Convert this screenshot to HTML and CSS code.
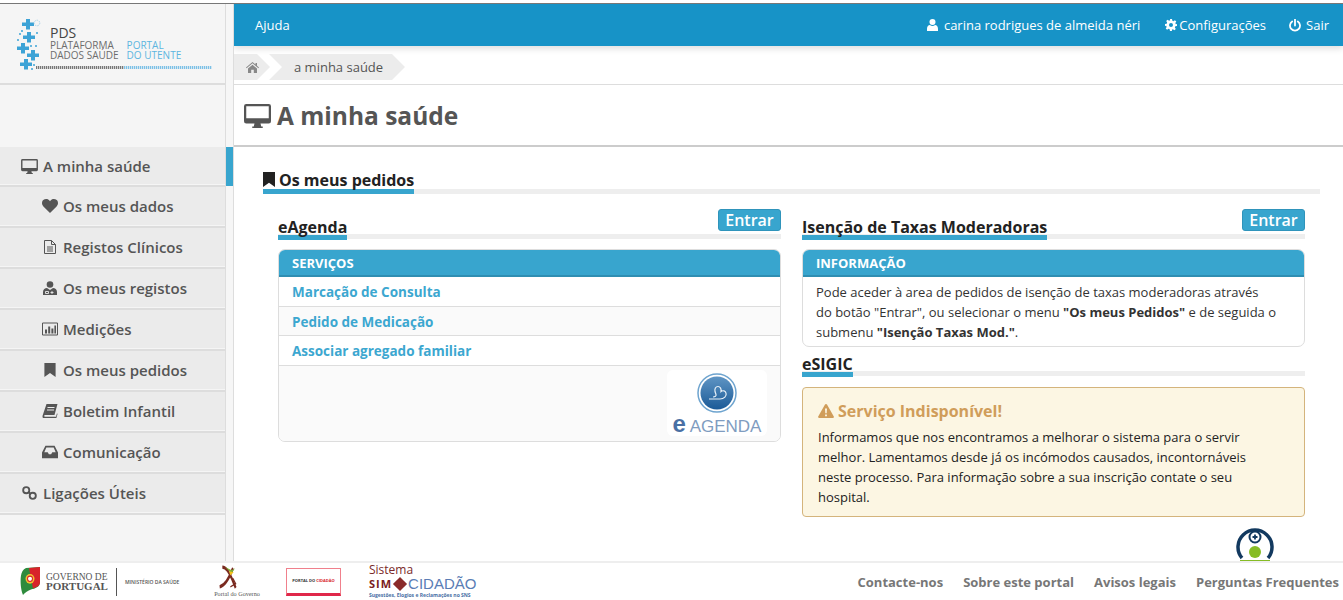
FILE: index.html
```html
<!DOCTYPE html>
<html lang="pt">
<head>
<meta charset="utf-8">
<title>A minha saúde</title>
<link rel="stylesheet" href="styles.css">
</head>
<body>
<svg class="defs" width="0" height="0" aria-hidden="true">
  <symbol id="i-desktop" viewBox="0 0 18 16"><path d="M1.5 0h15A1.5 1.5 0 0 1 18 1.5v10a1.5 1.5 0 0 1-1.500 1.500H11l.5 2h1v1h-7v-1h1l.5-2H1.500A1.500 1.500 0 0 1 0 11.500v-10A1.500 1.500 0 0 1 1.500 0zM1.500 1.500v8h15v-8z" fill-rule="evenodd"/></symbol>
  <symbol id="i-heart" viewBox="0 0 16 14"><path d="M8 14 1.400 7.500C-.5 5.500-.4 2.600 1.300 1.100 3-.4 5.700-.3 7.200 1.300L8 2.200l.8-.9C10.300-.3 13-.4 14.700 1.100c1.700 1.500 1.800 4.400-.1 6.400z"/></symbol>
  <symbol id="i-file" viewBox="0 0 12 14"><path d="M.5.500h7l4 4v9H.5zM7.500.500v4h4M3 7h6M3 9h6M3 11h6" fill="none" stroke="currentColor"/></symbol>
  <symbol id="i-userdoc" viewBox="0 0 14 14"><circle cx="7" cy="3.500" r="3.300"/><path d="M0 14v-3c0-2.500 2-4 4-4l3 2 3-2c2 0 4 1.500 4 4v3z"/><path d="M2.500 10.500h3v2h-3zM9 10v3M7.500 11.500h3" fill="none" stroke="#ebebeb" stroke-width=".9"/></symbol>
  <symbol id="i-chart" viewBox="0 0 16 13"><path d="M.5.500h15v12H.5z" fill="none" stroke="currentColor"/><path d="M3 7h2v4H3zM6.200 4h2v7h-2zM9.400 6h2v5h-2zM12.400 3h1.600v8h-1.600z"/></symbol>
  <symbol id="i-bookmark" viewBox="0 0 12 15"><path d="M0 0h12v15L6 10.800 0 15z"/></symbol>
  <symbol id="i-book" viewBox="0 0 15 14"><path d="M4 0h11l-3 11H3c-1 0-1.300.6-1.300 1s.3.800 1.300.800h10.500l1-3.500.5.700-1.400 5H3c-2 0-3-1-3-2.500 0-.5.100-1 .3-1.500zM5 3v1h7V3zM4.500 5.500v1h7v-1z" fill-rule="evenodd"/></symbol>
  <symbol id="i-inbox" viewBox="0 0 14 11"><path d="M3 0h8l3 6v5H0V6zM3.800 1.500 2 5.700h3l1 1.800h2l1-1.800h3l-1.800-4.200z" fill-rule="evenodd"/></symbol>
  <symbol id="i-link" viewBox="0 0 16 15"><g fill="none" stroke="currentColor" stroke-width="2"><circle cx="4.500" cy="4.500" r="3.300"/><circle cx="11.500" cy="10.500" r="3.300"/><path d="M6.500 6.500 9.500 8.500"/></g></symbol>
  <symbol id="i-home" viewBox="0 0 13 11"><path d="M6.500 0 9.500 2.500V1h1.500v2.800L13 5.500l-.6.700-5.900-5-5.900 5L0 5.500zM2 6.500l4.500-3.800L11 6.500V11H7.800V7.800H5.200V11H2z"/></symbol>
  <symbol id="i-user" viewBox="0 0 12 13"><circle cx="6" cy="3.300" r="3.300"/><path d="M0 13v-2.500C0 8 1.500 6.500 3.200 6.500 4 7.100 5 7.500 6 7.500s2-.4 2.800-1C10.500 6.500 12 8 12 10.500V13z"/></symbol>
  <symbol id="i-cog" viewBox="0 0 24 24"><path d="M10 0h4l.7 3.400 2.200.9 2.900-1.900 2.800 2.800-1.900 2.900.9 2.200L24 10v4l-3.400.7-.9 2.200 1.900 2.900-2.800 2.800-2.900-1.900-2.200.9L14 24h-4l-.7-3.400-2.200-.9-2.900 1.900-2.800-2.800 1.900-2.900-.9-2.200L0 14v-4l3.400-.7.900-2.200-1.900-2.900 2.800-2.800 2.900 1.900 2.200-.9zM12 8a4 4 0 1 0 0 8 4 4 0 0 0 0-8z" fill-rule="evenodd"/></symbol>
  <symbol id="i-power" viewBox="0 0 12 13"><path d="M3.200 2.500a5 5 0 1 0 5.600 0M6 .5v6" fill="none" stroke="currentColor" stroke-width="1.800" stroke-linecap="round"/></symbol>
  <symbol id="i-warning" viewBox="0 0 16 14"><path d="M8 0c.5 0 .8.200 1 .6l6.800 12c.4.700-.1 1.400-.8 1.400H1c-.7 0-1.200-.7-.8-1.400L7 .6C7.200.2 7.500 0 8 0zM7 4.500l.3 4.800h1.400L9 4.500zM7.100 10.500v1.800h1.800v-1.800z" fill-rule="evenodd"/></symbol>
</svg>

<div class="topline"></div>

<div class="app">
  <aside class="sidebar">
    <div class="logo">
      <svg class="logo-mark" width="32" height="54" viewBox="0 0 32 54" aria-hidden="true">
        <path d="M9 0h4v3.500h4v3.500h-4v3.500H9V7H5V3.500h4zM10 13h4v3.500h4v3.500h-4v3.500h-4V20H6v-3.500h4zM4 24h4v3.500h4V31H8v3.500H4V31H0v-3.500h4zM14 31h4v3.500h4V38h-4v3.500h-4V38h-4v-3.500h4zM7 40h4v3.500h4V47h-4v3.500H7V47H3v-3.500h4z"/>
        <circle cx="20" cy="4" r="2.800" fill="none" stroke="#a8d4ea" stroke-dasharray="1.500 1"/>
        <circle cx="20" cy="14" r="1"/><circle cx="3" cy="15" r="1"/><circle cx="1" cy="21" r="1"/><circle cx="14" cy="27" r="1"/><circle cx="19" cy="27" r="1"/><circle cx="17" cy="46" r="1"/><circle cx="5" cy="12" r="1"/><circle cx="15" cy="50" r="1"/>
      </svg>
      <div class="logo-text">
        <div class="logo-pds">PDS</div>
        <div class="logo-lines">
          <div class="logo-grey">PLATAFORMA<br>DADOS SAÚDE</div>
          <div class="logo-blue">PORTAL<br>DO UTENTE</div>
        </div>
      </div>
      <div class="logo-rule"></div>
    </div>
    <div class="side-gap"></div>
    <nav class="side-nav">
      <a class="side-item side-first"><svg class="ic ic-top"><use href="#i-desktop"/></svg>A minha saúde</a>
      <a class="side-item side-sub"><svg class="ic ic-heart"><use href="#i-heart"/></svg>Os meus dados</a>
      <a class="side-item side-sub"><svg class="ic ic-file"><use href="#i-file"/></svg>Registos Clínicos</a>
      <a class="side-item side-sub"><svg class="ic ic-file"><use href="#i-userdoc"/></svg>Os meus registos</a>
      <a class="side-item side-sub"><svg class="ic ic-heart"><use href="#i-chart"/></svg>Medições</a>
      <a class="side-item side-sub"><svg class="ic ic-file"><use href="#i-bookmark"/></svg>Os meus pedidos</a>
      <a class="side-item side-sub"><svg class="ic ic-file"><use href="#i-book"/></svg>Boletim Infantil</a>
      <a class="side-item side-sub"><svg class="ic ic-file"><use href="#i-inbox"/></svg>Comunicação</a>
      <a class="side-item side-link"><svg class="ic ic-link"><use href="#i-link"/></svg>Ligações Úteis</a>
    </nav>
  </aside>

  <div class="gutter"><div class="gutter-mark"></div></div>

  <main class="main">
    <header class="topbar">
      <a class="top-help">Ajuda</a>
      <div class="top-right">
        <a class="top-link top-user"><svg class="ic-user"><use href="#i-user"/></svg>carina rodrigues de almeida néri</a>
        <a class="top-link top-conf"><svg class="ic-cog"><use href="#i-cog"/></svg>Configurações</a>
        <a class="top-link top-exit"><svg class="ic-power"><use href="#i-power"/></svg>Sair</a>
      </div>
    </header>

    <div class="crumbs">
      <div class="crumb-row">
        <a class="crumb crumb-home"><svg class="ic-home"><use href="#i-home"/></svg></a>
        <a class="crumb crumb-text">a minha saúde</a>
      </div>
    </div>

    <div class="page-title">
      <svg class="ic-title"><use href="#i-desktop"/></svg>
      <h1>A minha saúde</h1>
    </div>

    <div class="content">
      <h2 class="section-head"><span class="section-label"><svg class="ic-sec"><use href="#i-bookmark"/></svg>Os meus pedidos</span></h2>

      <div class="columns">
        <section class="col">
          <div class="sub-head-row">
            <h3 class="sub-head"><span>eAgenda</span></h3>
            <a class="btn-enter">Entrar</a>
          </div>
          <div class="panel">
            <div class="panel-head">SERVIÇOS</div>
            <a class="panel-row">Marcação de Consulta</a>
            <a class="panel-row panel-row-alt">Pedido de Medicação</a>
            <a class="panel-row">Associar agregado familiar</a>
            <div class="panel-foot">
              <div class="eagenda">
                <svg width="40" height="40" viewBox="0 0 40 40" aria-hidden="true">
                  <defs><linearGradient id="ball" x1="0" y1="0" x2="0" y2="1"><stop offset="0" stop-color="#5f95c4"/><stop offset="1" stop-color="#1b5a97"/></linearGradient></defs>
                  <circle cx="20" cy="20" r="19" fill="#fff" stroke="#6ea4cf" stroke-width="1.500"/>
                  <circle cx="20" cy="20" r="16.500" fill="url(#ball)"/>
                  <path d="M12 26h11c4 0 7-3 6-6-.6-2-3-3-5-1.500.5-3-1-5-3-5-2.500 0-3.500 2.500-3 5l1 3c.5 1.500-1 2.500-3 2.500" fill="none" stroke="#e8f1f8" stroke-width="1.200"/>
                </svg>
                <div class="eagenda-text"><b>e</b> AGENDA</div>
              </div>
            </div>
          </div>
        </section>

        <section class="col">
          <div class="sub-head-row">
            <h3 class="sub-head"><span>Isenção de Taxas Moderadoras</span></h3>
            <a class="btn-enter">Entrar</a>
          </div>
          <div class="panel">
            <div class="panel-head">INFORMAÇÃO</div>
            <p class="panel-body">Pode aceder à area de pedidos de isenção de taxas moderadoras através<br>do botão "Entrar", ou selecionar o menu <b>"Os meus Pedidos"</b> e de seguida o<br>submenu <b>"Isenção Taxas Mod."</b>.</p>
          </div>
          <h3 class="sub-head sub-head-plain"><span>eSIGIC</span></h3>
          <div class="alert">
            <div class="alert-title"><svg class="ic-warn"><use href="#i-warning"/></svg>Serviço Indisponível!</div>
            <p>Informamos que nos encontramos a melhorar o sistema para o servir melhor. Lamentamos desde já os incómodos causados, incontornáveis neste processo. Para informação sobre a sua inscrição contate o seu hospital.</p>
          </div>
          <div class="widget-wrap">
            <svg width="38" height="44" viewBox="0 0 38 44" aria-hidden="true">
              <path d="M6 33A17 17 0 1 1 32 33" fill="none" stroke="#12395f" stroke-width="3.500"/>
              <circle cx="19" cy="12" r="5.500" fill="none" stroke="#12395f" stroke-width="2"/>
              <path d="M16.500 12h5M19 9.500v5" fill="none" stroke="#12395f" stroke-width="1.800"/>
              <circle cx="19" cy="27" r="6" fill="#86bc25"/>
              <path d="M4 35h30v6H4z" fill="#86bc25"/>
            </svg>
          </div>
        </section>
      </div>
    </div>
  </main>
</div>

<footer class="footer">
  <div class="foot-logos">
    <div class="gov">
      <svg width="20" height="29" viewBox="0 0 20 27" preserveAspectRatio="none" aria-hidden="true">
        <path d="M6 1 20 0v14c0 5-5 6-9 7-3 1-6 3-8 5C1 22 0 14 1 8c.5-3 2-6 5-7z" fill="#2e8b3d"/>
        <path d="M9 1 20 0v14c0 4-4 5-7 6z" fill="#d8232a"/>
        <circle cx="10" cy="11" r="4.500" fill="#f2c230"/>
        <circle cx="10" cy="11" r="2.500" fill="#fff" stroke="#d8232a"/>
      </svg>
      <div class="gov-text"><span class="gov-a">GOVERNO DE</span><span class="gov-b">PORTUGAL</span></div>
      <div class="gov-rule"></div>
      <span class="gov-min">MINISTÉRIO DA SAÚDE</span>
    </div>
    <div class="pg">
      <svg class="pg-mark" width="24" height="25" viewBox="0 0 36 24" preserveAspectRatio="none" aria-hidden="true">
        <path d="M8 2c6 0 10 5 15 12l5 8M4 21c6-1 13-6 20-18" fill="none" stroke="#7a2a20" stroke-width="3"/>
        <path d="M12 2l10 3 5-2-5 5z" fill="#7fb23a"/><path d="M18 6l7 1-5 3z" fill="#f1c21b"/>
        <path d="M24 13l4 5-8 3" fill="none" stroke="#7a2a20" stroke-width="1.500"/>
      </svg>
      <span class="pg-text">Portal do Governo</span>
    </div>
    <div class="pc"><span class="pc-a">PORTAL DO</span><span class="pc-b">CIDADÃO</span></div>
    <div class="sim">
      <div class="sim-top">Sistema</div>
      <div class="sim-mid"><b>SIM</b><i class="sim-dia"></i><span>CIDADÃO</span></div>
      <div class="sim-bot">Sugestões, Elogios e Reclamações no SNS</div>
    </div>
  </div>
  <nav class="foot-links">
    <a>Contacte-nos</a><a>Sobre este portal</a><a>Avisos legais</a><a>Perguntas Frequentes</a>
  </nav>
</footer>
</body>
</html>
```
FILE: styles.css
```css
* { box-sizing: border-box; }
html, body { height: 100%; }
body {
  margin: 0;
  height: 600px;
  overflow: hidden;
  display: flex;
  flex-direction: column;
  background: #fff;
  font-family: "Open Sans", "Liberation Sans", sans-serif;
  font-size: 13px;
  color: #333;
}
.defs { position: absolute; }
svg { fill: currentColor; display: block; flex: none; }
h1, h2, h3, p { margin: 0; }

.topline { height: 4px; flex: none; border-bottom: 1px solid #777; }

.app { flex: 1; min-height: 0; display: flex; }

/* Sidebar */
.sidebar {
  width: 226px;
  flex: none;
  background: #f5f5f5;
  border-right: 1px solid #ddd;
  display: flex;
  flex-direction: column;
}
.logo {
  height: 81px;
  flex: none;
  border-bottom: 2px solid #ddd;
  position: relative;
  padding: 15px 0 0 17px;
  display: flex;
  gap: 1px;
}
.logo-mark { fill: #3da3d6; }
.logo-text { color: #6d6d6d; padding-top: 7px; }
.logo-pds { font-size: 14px; line-height: 14px; color: #444; }
.logo-lines { display: flex; gap: 8px; font-size: 10px; line-height: 10px; margin-top: 0; white-space: nowrap; }
.logo-blue { color: #5db5e0; }
.logo-rule {
  position: absolute;
  left: 36px;
  top: 62px;
  width: 176px;
  height: 3px;
  background:
    repeating-linear-gradient(90deg, transparent 0 1px, rgba(245,245,245,.7) 1px 2px),
    linear-gradient(90deg, #777 0 50%, #7cc0e6 50% 100%);
}
.side-gap { height: 62px; flex: none; }
.side-nav { display: flex; flex-direction: column; }
.side-item {
  height: 41px;
  padding-bottom: 2px;
  display: flex;
  align-items: center;
  background: #ebebeb;
  border-bottom: 2px solid #ddd;
  box-shadow: inset 0 -1px 0 #f5f5f5;
  color: #555;
  font-size: 15px;
  font-weight: 600;
  white-space: nowrap;
}
.side-first { height: 40px; padding-bottom: 0; padding-left: 21px; }
.side-sub { padding-left: 42px; }
.side-link { padding-left: 22px; }
.ic { margin-right: 5px; }
.ic-top { width: 17px; height: 15px; }
.ic-heart { width: 16px; height: 14px; }
.ic-file { width: 16px; height: 14px; }
.ic-link { width: 15px; height: 14px; margin-right: 6px; }

.gutter { width: 7px; flex: none; background: #f6f6f6; }
.gutter-mark { height: 39px; margin-top: 143px; background: #38a5ce; }

/* Main */
.main {
  flex: 1;
  min-width: 0;
  border-left: 1px solid #ddd;
  overflow: hidden;
  display: flex;
  flex-direction: column;
}
.topbar {
  height: 42px;
  flex: none;
  background: #1793c7;
  box-shadow: 0 3px 6px rgba(0,0,0,.12);
  color: #fff;
  display: flex;
  align-items: center;
  justify-content: space-between;
  padding: 0 0 0 21px;
}
.top-right { display: flex; align-items: center; }
.top-link { display: flex; align-items: center; white-space: nowrap; }
.top-user { margin-right: 25px; }
.top-conf { margin-right: 23px; }
.top-exit { margin-right: 14px; }
.ic-user { width: 11px; height: 12px; margin-right: 6px; }
.ic-cog { width: 12px; height: 12px; margin-right: 2px; }
.ic-power { width: 12px; height: 13px; margin-right: 5px; }

.crumbs { height: 39px; flex: none; border-bottom: 1px solid #ddd; padding-top: 8px; }
.crumb-row { display: flex; height: 26px; }
.crumb { display: flex; align-items: center; background: #ececec; color: #555; }
.crumb-home {
  width: 36px;
  padding-left: 12px;
  clip-path: polygon(0 0, calc(100% - 13px) 0, 100% 50%, calc(100% - 13px) 100%, 0 100%);
  color: #888;
}
.crumb-text {
  margin-left: -1px;
  width: 136px;
  padding-left: 25px;
  clip-path: polygon(0 0, calc(100% - 13px) 0, 100% 50%, calc(100% - 13px) 100%, 0 100%, 13px 50%);
}
.ic-home { width: 13px; height: 11px; }

.page-title {
  height: 62px;
  flex: none;
  border-bottom: 2px solid #ccc;
  display: flex;
  align-items: center;
  gap: 6px;
  padding: 1px 0 0 10px;
  color: #555;
}
.ic-title { width: 27px; height: 24px; }
.page-title h1 { font-size: 24.500px; font-weight: 700; line-height: 34px; }

.content { padding: 23px 23px 0 29px; }
.section-head { border-bottom: 5px solid #eee; height: 24px; font-size: 16px; line-height: 20px; color: #222; font-weight: 700; }
.section-label { display: inline-flex; align-items: center; gap: 4px; height: 24px; border-bottom: 5px solid #38a5ce; }
.ic-sec { width: 12px; height: 15px; }

.columns { display: flex; gap: 21px; padding: 15px 15px 0 15px; }
.col { width: 503px; flex: none; display: flex; flex-direction: column; }

.sub-head-row { position: relative; }
.btn-enter {
  position: absolute;
  top: 0;
  right: 0;
  width: 63px;
  height: 22px;
  background: #38a5ce;
  border: 1px solid #2f94bb;
  border-radius: 3px;
  color: #fff;
  font-size: 16px;
  font-weight: 600;
  line-height: 20px;
  text-align: center;
}
.sub-head { height: 30px; padding-top: 7px; border-bottom: 5px solid #eee; font-size: 16px; line-height: 22px; font-weight: 700; color: #222; }
.sub-head span { display: inline-block; height: 23px; border-bottom: 5px solid #38a5ce; box-sizing: border-box; line-height: 20px; }
.sub-head-plain { height: 24px; padding-top: 1px; margin-top: 5px; }

.panel { margin-top: 10px; border: 1px solid #ddd; border-radius: 7px; overflow: hidden; background: #fff; }
.panel-head {
  height: 28px;
  margin: -1px -1px 0;
  padding-left: 14px;
  background: #38a5ce;
  border-bottom: 2px solid #2f8eb2;
  color: #fff;
  font-weight: 700;
  font-size: 13px;
  line-height: 28px;
}
.panel-row {
  display: block;
  height: 29.500px;
  padding-left: 13px;
  border-bottom: 1px solid #ddd;
  color: #3ca7d0;
  font-weight: 700;
  font-size: 13.500px;
  line-height: 30px;
}
.panel-row-alt { background: #fafafa; }
.panel-foot { height: 75px; background: #fafafa; display: flex; justify-content: flex-end; padding: 4px 13px 0 0; }
.eagenda { width: 100px; height: 66px; background: #fff; border-radius: 6px; display: flex; flex-direction: column; align-items: center; padding-top: 3px; }
.eagenda-text { font-family: "Liberation Sans", sans-serif; font-size: 17px; line-height: 20px; color: #7f9cc0; margin-top: 2px; white-space: nowrap; }
.eagenda-text b { color: #4a70a4; font-size: 24px; line-height: 18px; }

.panel-body { padding: 5px 14px 4px 13px; line-height: 20px; color: #333; }

.alert {
  margin-top: 11px;
  height: 130px;
  border: 1px solid #d4b47c;
  border-radius: 4px;
  background: #fcf6e3;
  padding: 12px 50px 12px 15px;
  color: #222;
  line-height: 20px;
}
.alert-title { display: flex; align-items: center; gap: 4px; font-size: 16px; font-weight: 700; color: #d09d5a; line-height: 22px; margin-bottom: 5px; }
.ic-warn { width: 16px; height: 14px; }
.widget-wrap { margin: 8px 31px 0 auto; }

/* Footer */
.footer {
  height: 39px;
  flex: none;
  background: #fff;
  border-top: 2px solid #eee;
  display: flex;
  align-items: center;
  justify-content: space-between;
  padding-right: 4px;
}
.foot-logos { display: flex; align-items: center; padding-left: 20px; }
.gov { display: flex; align-items: center; width: 182px; }
.gov-text { display: flex; flex-direction: column; margin-left: 6px; font-family: "Liberation Serif", serif; color: #555; line-height: 9px; }
.gov-a { font-size: 9.500px; }
.gov-b { font-size: 11px; font-weight: 700; }
.gov-rule { width: 1px; height: 28px; background: #555; margin: 0 8px; }
.gov-min { font-size: 5px; font-weight: 600; color: #555; white-space: nowrap; }
.pg { width: 70px; display: flex; flex-direction: column; align-items: center; }
.pg-mark { margin-right: 16px; }
.pg-text { font-family: "Liberation Serif", serif; font-size: 6.200px; line-height: 8px; color: #555; white-space: nowrap; }
.pc { width: 55px; height: 28px; margin-left: 14px; border: 1px solid #f0808c; border-bottom: 3px solid #e0284a; display: flex; align-items: center; justify-content: center; gap: 1px; font-size: 4px; font-weight: 700; color: #333; white-space: nowrap; }
.pc-b { color: #d8232a; }
.sim { margin-left: 28px; width: 110px; color: #7a2a2a; }
.sim-top { font-size: 12px; line-height: 11px; }
.sim-mid { display: flex; align-items: center; gap: 1px; height: 17px; font-size: 12px; }
.sim-mid b { letter-spacing: 1px; font-size: 11px; color: #7a2020; }
.sim-mid span { font-family: "Liberation Sans", sans-serif; font-size: 15px; color: #5a7db5; }
.sim-dia { width: 10px; height: 10px; margin: 0 2px; background: #8a2a2a; transform: rotate(45deg); }
.sim-bot { font-size: 5px; font-weight: 700; color: #4a6fa5; white-space: nowrap; line-height: 7px; }
.foot-links { display: flex; gap: 20px; font-weight: 700; font-size: 13px; color: #777; }
```
